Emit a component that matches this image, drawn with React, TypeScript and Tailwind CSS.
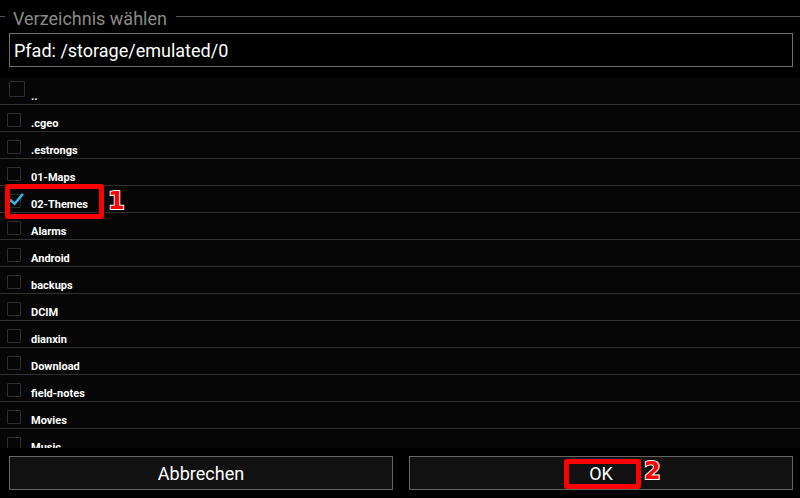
const folders = [
  "..",
  ".cgeo",
  ".estrongs",
  "01-Maps",
  "02-Themes",
  "Alarms",
  "Android",
  "backups",
  "DCIM",
  "dianxin",
  "Download",
  "field-notes",
  "Movies",
  "Music",
];

function CheckBox({ checked, first }: { checked?: boolean; first?: boolean }) {
  return (
    <div
      className={
        first
          ? "absolute left-[9px] top-[3px] w-[16px] h-[16px] border border-[#2e2e2e] rounded-[1px]"
          : "absolute left-[7px] top-[8px] w-[14px] h-[14px] border border-[#2e2e2e] rounded-[1px]"
      }
    >
      {checked && (
        <svg
          viewBox="0 0 16 16"
          className="absolute left-[1px] top-[-3px] w-[15px] h-[15px]"
        >
          <path
            d="M2 9 L6 12.5 L14 3"
            fill="none"
            stroke="#33b5e5"
            strokeWidth="2.6"
            strokeLinecap="square"
          />
        </svg>
      )}
    </div>
  );
}

export default function App() {
  return (
    <div
      className="relative w-[800px] h-[498px] bg-black flex flex-col overflow-hidden"
      style={{ fontFamily: "Roboto, 'Liberation Sans', sans-serif" }}
    >
      {/* Legend */}
      <div className="h-[33px] flex items-center">
        <div className="w-[5px] h-px bg-[#555]" />
        <span className="px-[9px] text-[18px] leading-[20px] text-[#8a8a8a] mt-[4px] -ml-[1px]">
          Verzeichnis wählen
        </span>
        <div className="flex-1 h-px bg-[#555]" />
      </div>

      {/* Path */}
      <div className="mx-[9px] mr-[7px] h-[34px] border border-[#707070] flex items-center px-[4px]">
        <span className="text-[18px] text-white leading-none mt-[1px]">
          Pfad: /storage/emulated/0
        </span>
      </div>

      {/* Folder list */}
      <div className="mt-[11px] h-[370px] overflow-hidden bg-[#060606]">
        {folders.map((name, i) => (
          <div
            key={name}
            className="relative h-[27px] border-b border-[#303030] flex items-end pl-[31px] pb-0"
          >
            <CheckBox first={i === 0} checked={name === "02-Themes"} />
            <span className="text-[11px] font-bold text-white leading-[14px]">
              {name}
            </span>
          </div>
        ))}
      </div>

      {/* Buttons */}
      <div className="mt-[8px] px-[9px] pr-[7px] flex gap-[16px]">
        <button className="flex-1 h-[34px] bg-[#111] border border-[#666] text-white text-[18px]">
          Abbrechen
        </button>
        <button className="flex-1 h-[34px] bg-[#111] border border-[#666] text-white text-[18px]">
          OK
        </button>
      </div>

      {/* Annotations */}
      <div className="absolute left-[5px] top-[184px] w-[99px] h-[35px] border-[5px] border-[#ff0000] rounded-[3px]" />
      <span
        className="absolute left-[108px] top-[189px] text-[24px] font-black text-[#ff0000] leading-none"
        style={{
          fontFamily: "'DejaVu Sans', sans-serif",
          WebkitTextStroke: "2px white",
          paintOrder: "stroke fill",
        }}
      >
        1
      </span>
      <div className="absolute left-[564px] top-[459px] w-[77px] h-[30px] border-[5px] border-[#ff0000] rounded-[3px]" />
      <span
        className="absolute left-[644px] top-[459px] text-[24px] font-black text-[#ff0000] leading-none"
        style={{
          fontFamily: "'DejaVu Sans', sans-serif",
          WebkitTextStroke: "2px white",
          paintOrder: "stroke fill",
        }}
      >
        2
      </span>
    </div>
  );
}
